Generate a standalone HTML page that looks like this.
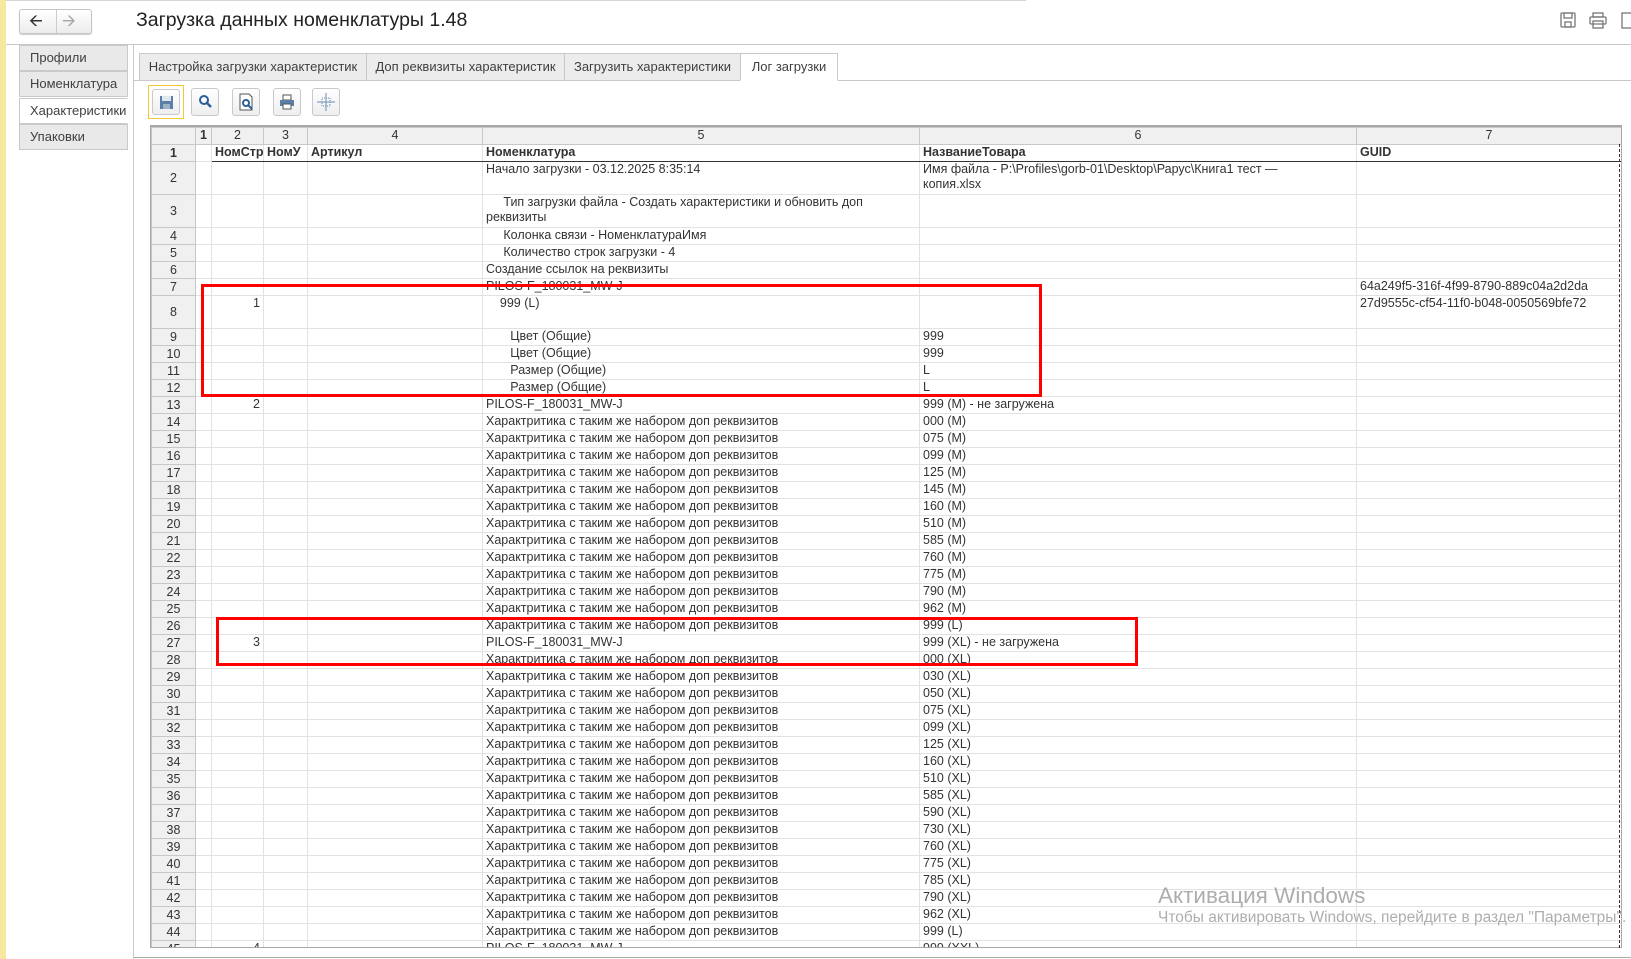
<!DOCTYPE html>
<html><head><meta charset="utf-8">
<style>
*{box-sizing:border-box;margin:0;padding:0}
body{width:1631px;height:959px;position:relative;overflow:hidden;background:#fff;font-family:"Liberation Sans",Arial,sans-serif;color:#333}
.abs{position:absolute}
.ystrip{left:0;top:0;width:6px;height:959px;background:#f7e8a0}
.hline{left:6px;height:1px;background:#c8c8c8}
.nav{left:19px;top:9px;width:73px;height:25px;border:1px solid #c5c5c5;border-radius:3px;background:linear-gradient(#fff,#ececec);box-shadow:0 1px 1px #ccc}
.nav span{position:absolute;top:1px;font-size:17px;line-height:20px}
.title{left:136px;top:9px;font-size:19.5px;color:#222}
.ltab{left:19px;width:109px;height:26px;border:1px solid #c9c9c9;background:#e9e9e9;font-size:13px;line-height:24px;padding-left:10px;color:#404040}
.ttab{top:53px;height:28px;border:1px solid #c9c9c9;background:#ececec;font-size:13px;line-height:26px;text-align:center;color:#404040}
.btn{top:88px;width:28px;height:28px;border:1px solid #c9c9c9;border-radius:3px;background:linear-gradient(#fff,#eee)}
table{border-collapse:collapse;table-layout:fixed;font-size:12.5px;color:#333}
td{border:1px solid #e2e2e2;height:17px;line-height:15px;padding:0 3px;white-space:nowrap;overflow:hidden;vertical-align:top}
td.rh{background:#f0f0f0;border-color:#c8c8c8;text-align:center;color:#333;vertical-align:middle}
tr.ch td{background:#f0f0f0;text-align:center;border-color:#c8c8c8;height:17px}
tr.hd td{font-weight:bold;border-bottom:1px solid #333}
.r{text-align:right}
tr.d td{height:33px}
.red{border:3px solid #f00}
</style></head><body>
<div class="abs ystrip"></div>
<div class="abs hline" style="top:0;width:1020px;background:#d6d6d6"></div>
<div class="abs hline" style="top:44px;width:1625px"></div>
<div class="abs nav"><span style="left:9px">&#129128;</span><span style="left:42px;color:#aaa">&#129130;</span><div class="abs" style="left:36px;top:0;width:1px;height:23px;background:#ccc"></div></div>
<div class="abs title">Загрузка данных номенклатуры 1.48</div>
<svg class="abs" style="left:1560px;top:12px" width="71" height="18">
<g fill="none" stroke="#777" stroke-width="1.3"><rect x="1" y="1" width="14" height="14" rx="1"/><rect x="4" y="1" width="8" height="5"/><rect x="5" y="10" width="6" height="5"/>
<rect x="33" y="1" width="10" height="4"/><rect x="30" y="5" width="16" height="7" rx="1"/><rect x="33" y="9" width="10" height="7"/>
<rect x="62" y="1" width="12" height="15"/></g></svg>
<div class="abs" style="left:133px;top:45px;width:1px;height:914px;background:#c8c8c8"></div>
<div class="abs ltab" style="top:45px">Профили</div>
<div class="abs ltab" style="top:71px">Номенклатура</div>
<div class="abs ltab" style="top:98px;background:#fff;border-right-color:#fff">Характеристики</div>
<div class="abs ltab" style="top:124px">Упаковки</div>
<div class="abs hline" style="left:134px;top:80px;width:1497px"></div>
<div class="abs ttab" style="left:139px;width:228px">Настройка загрузки характеристик</div>
<div class="abs ttab" style="left:366px;width:199px">Доп реквизиты характеристик</div>
<div class="abs ttab" style="left:564px;width:177px">Загрузить характеристики</div>
<div class="abs ttab" style="left:740px;width:98px;background:#fff;border-bottom-color:#fff">Лог загрузки</div>
<div class="abs" style="left:148px;top:85px;width:36px;height:34px;border:1px solid #f0c830"></div>
<div class="abs btn" style="left:152px;top:89px;width:28px;height:26px"><svg width="26" height="24"><rect x="7" y="6" width="13" height="13" fill="#5a7fa8"/><rect x="9" y="6" width="9" height="5" fill="#dfe6ee"/><rect x="10" y="14" width="7" height="5" fill="#9fb3c8"/></svg></div>
<div class="abs btn" style="left:191px"><svg width="26" height="26"><circle cx="12" cy="11" r="4" fill="none" stroke="#2a5f99" stroke-width="2"/><line x1="15" y1="14" x2="19" y2="18" stroke="#2a5f99" stroke-width="2.4"/></svg></div>
<div class="abs btn" style="left:232px"><svg width="26" height="26"><path d="M7 5h9l3 3v13H7z" fill="#fff" stroke="#555"/><circle cx="13" cy="14" r="3" fill="none" stroke="#2a5f99" stroke-width="2"/><line x1="15" y1="16" x2="19" y2="20" stroke="#2a5f99" stroke-width="2"/></svg></div>
<div class="abs btn" style="left:273px"><svg width="26" height="26"><rect x="9" y="6" width="8" height="5" fill="#fff" stroke="#555"/><rect x="6" y="11" width="14" height="6" fill="#5a7fa8"/><rect x="9" y="15" width="8" height="5" fill="#fff" stroke="#555"/></svg></div>
<div class="abs btn" style="left:312px"><svg width="26" height="26" stroke="#6a8fb8" fill="none"><line x1="13" y1="4" x2="13" y2="22"/><line x1="4" y1="13" x2="22" y2="13"/><rect x="9" y="9" width="8" height="8" stroke-dasharray="1 1"/></svg></div>

<div class="abs" style="left:150px;top:125px;width:1472px;height:823px;border:1px solid #a8a8a8;border-top:2px solid #a8a8a8;overflow:hidden">
<table style="width:1470px">
<colgroup><col style="width:44px"><col style="width:16px"><col style="width:52px"><col style="width:44px"><col style="width:175px"><col style="width:437px"><col style="width:437px"><col style="width:265px"></colgroup>
<tr class="ch"><td></td><td style="font-weight:bold">1</td><td>2</td><td>3</td><td>4</td><td>5</td><td>6</td><td>7</td></tr>
<tr class="hd"><td class="rh" style="font-weight:bold;border-bottom-color:#c8c8c8">1</td><td style="border-bottom-color:#e2e2e2"></td><td>НомСтр</td><td>НомУ</td><td>Артикул</td><td>Номенклатура</td><td>НазваниеТовара</td><td>GUID</td></tr>
<tr class="d"><td class="rh">2</td><td></td><td></td><td></td><td></td><td>Начало загрузки - 03.12.2025 8:35:14</td><td style="white-space:normal">Имя файла - P:\Profiles\gorb-01\Desktop\Рарус\Книга1 тест —<br>копия.xlsx</td><td></td></tr>
<tr class="d"><td class="rh">3</td><td></td><td></td><td></td><td></td><td style="white-space:normal">&nbsp;&nbsp;&nbsp;&nbsp;&nbsp;Тип загрузки файла - Создать характеристики и обновить доп<br>реквизиты</td><td></td><td></td></tr>
<tr><td class="rh">4</td><td></td><td></td><td></td><td></td><td>&nbsp;&nbsp;&nbsp;&nbsp;&nbsp;Колонка связи - НоменклатураИмя</td><td></td><td></td></tr>
<tr><td class="rh">5</td><td></td><td></td><td></td><td></td><td>&nbsp;&nbsp;&nbsp;&nbsp;&nbsp;Количество строк загрузки - 4</td><td></td><td></td></tr>
<tr><td class="rh">6</td><td></td><td></td><td></td><td></td><td>Создание ссылок на реквизиты</td><td></td><td></td></tr>
<tr><td class="rh">7</td><td></td><td></td><td></td><td></td><td>PILOS-F_180031_MW-J</td><td></td><td>64a249f5-316f-4f99-8790-889c04a2d2da</td></tr>
<tr class="d"><td class="rh">8</td><td></td><td class="r">1</td><td></td><td></td><td>&nbsp;&nbsp;&nbsp;&nbsp;999 (L)</td><td></td><td>27d9555c-cf54-11f0-b048-0050569bfe72</td></tr>
<tr><td class="rh">9</td><td></td><td></td><td></td><td></td><td>&nbsp;&nbsp;&nbsp;&nbsp;&nbsp;&nbsp;&nbsp;Цвет (Общие)</td><td>999</td><td></td></tr>
<tr><td class="rh">10</td><td></td><td></td><td></td><td></td><td>&nbsp;&nbsp;&nbsp;&nbsp;&nbsp;&nbsp;&nbsp;Цвет (Общие)</td><td>999</td><td></td></tr>
<tr><td class="rh">11</td><td></td><td></td><td></td><td></td><td>&nbsp;&nbsp;&nbsp;&nbsp;&nbsp;&nbsp;&nbsp;Размер (Общие)</td><td>L</td><td></td></tr>
<tr><td class="rh">12</td><td></td><td></td><td></td><td></td><td>&nbsp;&nbsp;&nbsp;&nbsp;&nbsp;&nbsp;&nbsp;Размер (Общие)</td><td>L</td><td></td></tr>
<tr><td class="rh">13</td><td></td><td class="r">2</td><td></td><td></td><td>PILOS-F_180031_MW-J</td><td>999 (M) - не загружена</td><td></td></tr>
<tr><td class="rh">14</td><td></td><td></td><td></td><td></td><td>Характритика с таким же набором доп реквизитов</td><td>000 (M)</td><td></td></tr>
<tr><td class="rh">15</td><td></td><td></td><td></td><td></td><td>Характритика с таким же набором доп реквизитов</td><td>075 (M)</td><td></td></tr>
<tr><td class="rh">16</td><td></td><td></td><td></td><td></td><td>Характритика с таким же набором доп реквизитов</td><td>099 (M)</td><td></td></tr>
<tr><td class="rh">17</td><td></td><td></td><td></td><td></td><td>Характритика с таким же набором доп реквизитов</td><td>125 (M)</td><td></td></tr>
<tr><td class="rh">18</td><td></td><td></td><td></td><td></td><td>Характритика с таким же набором доп реквизитов</td><td>145 (M)</td><td></td></tr>
<tr><td class="rh">19</td><td></td><td></td><td></td><td></td><td>Характритика с таким же набором доп реквизитов</td><td>160 (M)</td><td></td></tr>
<tr><td class="rh">20</td><td></td><td></td><td></td><td></td><td>Характритика с таким же набором доп реквизитов</td><td>510 (M)</td><td></td></tr>
<tr><td class="rh">21</td><td></td><td></td><td></td><td></td><td>Характритика с таким же набором доп реквизитов</td><td>585 (M)</td><td></td></tr>
<tr><td class="rh">22</td><td></td><td></td><td></td><td></td><td>Характритика с таким же набором доп реквизитов</td><td>760 (M)</td><td></td></tr>
<tr><td class="rh">23</td><td></td><td></td><td></td><td></td><td>Характритика с таким же набором доп реквизитов</td><td>775 (M)</td><td></td></tr>
<tr><td class="rh">24</td><td></td><td></td><td></td><td></td><td>Характритика с таким же набором доп реквизитов</td><td>790 (M)</td><td></td></tr>
<tr><td class="rh">25</td><td></td><td></td><td></td><td></td><td>Характритика с таким же набором доп реквизитов</td><td>962 (M)</td><td></td></tr>
<tr><td class="rh">26</td><td></td><td></td><td></td><td></td><td>Характритика с таким же набором доп реквизитов</td><td>999 (L)</td><td></td></tr>
<tr><td class="rh">27</td><td></td><td class="r">3</td><td></td><td></td><td>PILOS-F_180031_MW-J</td><td>999 (XL) - не загружена</td><td></td></tr>
<tr><td class="rh">28</td><td></td><td></td><td></td><td></td><td>Характритика с таким же набором доп реквизитов</td><td>000 (XL)</td><td></td></tr>
<tr><td class="rh">29</td><td></td><td></td><td></td><td></td><td>Характритика с таким же набором доп реквизитов</td><td>030 (XL)</td><td></td></tr>
<tr><td class="rh">30</td><td></td><td></td><td></td><td></td><td>Характритика с таким же набором доп реквизитов</td><td>050 (XL)</td><td></td></tr>
<tr><td class="rh">31</td><td></td><td></td><td></td><td></td><td>Характритика с таким же набором доп реквизитов</td><td>075 (XL)</td><td></td></tr>
<tr><td class="rh">32</td><td></td><td></td><td></td><td></td><td>Характритика с таким же набором доп реквизитов</td><td>099 (XL)</td><td></td></tr>
<tr><td class="rh">33</td><td></td><td></td><td></td><td></td><td>Характритика с таким же набором доп реквизитов</td><td>125 (XL)</td><td></td></tr>
<tr><td class="rh">34</td><td></td><td></td><td></td><td></td><td>Характритика с таким же набором доп реквизитов</td><td>160 (XL)</td><td></td></tr>
<tr><td class="rh">35</td><td></td><td></td><td></td><td></td><td>Характритика с таким же набором доп реквизитов</td><td>510 (XL)</td><td></td></tr>
<tr><td class="rh">36</td><td></td><td></td><td></td><td></td><td>Характритика с таким же набором доп реквизитов</td><td>585 (XL)</td><td></td></tr>
<tr><td class="rh">37</td><td></td><td></td><td></td><td></td><td>Характритика с таким же набором доп реквизитов</td><td>590 (XL)</td><td></td></tr>
<tr><td class="rh">38</td><td></td><td></td><td></td><td></td><td>Характритика с таким же набором доп реквизитов</td><td>730 (XL)</td><td></td></tr>
<tr><td class="rh">39</td><td></td><td></td><td></td><td></td><td>Характритика с таким же набором доп реквизитов</td><td>760 (XL)</td><td></td></tr>
<tr><td class="rh">40</td><td></td><td></td><td></td><td></td><td>Характритика с таким же набором доп реквизитов</td><td>775 (XL)</td><td></td></tr>
<tr><td class="rh">41</td><td></td><td></td><td></td><td></td><td>Характритика с таким же набором доп реквизитов</td><td>785 (XL)</td><td></td></tr>
<tr><td class="rh">42</td><td></td><td></td><td></td><td></td><td>Характритика с таким же набором доп реквизитов</td><td>790 (XL)</td><td></td></tr>
<tr><td class="rh">43</td><td></td><td></td><td></td><td></td><td>Характритика с таким же набором доп реквизитов</td><td>962 (XL)</td><td></td></tr>
<tr><td class="rh">44</td><td></td><td></td><td></td><td></td><td>Характритика с таким же набором доп реквизитов</td><td>999 (L)</td><td></td></tr>
<tr><td class="rh">45</td><td></td><td class="r">4</td><td></td><td></td><td>PILOS-F_180031_MW-J</td><td>999 (XXL)</td><td></td></tr>
</table>
</div>
<div class="abs" style="left:1619px;top:144px;height:804px;border-left:1px dashed #333"></div>
<div class="abs hline" style="left:134px;top:957px;width:1497px;background:#aaa"></div>
<div class="abs red" style="left:201px;top:284px;width:841px;height:113px"></div>
<div class="abs red" style="left:216px;top:617px;width:922px;height:49px"></div>
<div class="abs" style="left:1158px;top:883px;font-size:22.5px;color:#adadad">Активация Windows</div>
<div class="abs" style="left:1158px;top:909px;font-size:15.5px;color:#adadad;white-space:nowrap">Чтобы активировать Windows, перейдите в раздел "Параметры".</div>
</body></html>
